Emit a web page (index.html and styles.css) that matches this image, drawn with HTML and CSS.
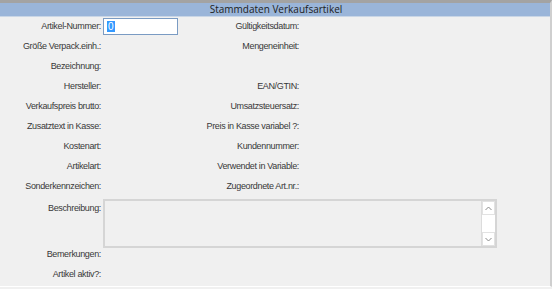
FILE: index.html
```html
<!DOCTYPE html>
<html lang="de">
<head>
    <meta charset="UTF-8">
    <title>Stammdaten Verkaufsartikel</title>
    <link rel="stylesheet" href="styles.css">
</head>
<body>
    <div class="window">
        <div class="title-bar">Stammdaten Verkaufsartikel</div>

        <div class="form">
            <div class="row first">
                <label class="lbl">Artikel-Nummer:</label>
                <div class="field"><div class="txt"><span class="sel">0</span></div></div>
                <label class="lbl">Gültigkeitsdatum:</label>
                <div class="field"></div>
            </div>
            <div class="row">
                <label class="lbl">Größe Verpack.einh.:</label>
                <div class="field"></div>
                <label class="lbl">Mengeneinheit:</label>
                <div class="field"></div>
            </div>
            <div class="row">
                <label class="lbl">Bezeichnung:</label>
                <div class="field"></div>
                <label class="lbl"></label>
                <div class="field"></div>
            </div>
            <div class="row">
                <label class="lbl">Hersteller:</label>
                <div class="field"></div>
                <label class="lbl">EAN/GTIN:</label>
                <div class="field"></div>
            </div>
            <div class="row">
                <label class="lbl">Verkaufspreis brutto:</label>
                <div class="field"></div>
                <label class="lbl">Umsatzsteuersatz:</label>
                <div class="field"></div>
            </div>
            <div class="row">
                <label class="lbl">Zusatztext in Kasse:</label>
                <div class="field"></div>
                <label class="lbl">Preis in Kasse variabel ?:</label>
                <div class="field"></div>
            </div>
            <div class="row">
                <label class="lbl">Kostenart:</label>
                <div class="field"></div>
                <label class="lbl">Kundennummer:</label>
                <div class="field"></div>
            </div>
            <div class="row">
                <label class="lbl">Artikelart:</label>
                <div class="field"></div>
                <label class="lbl">Verwendet in Variable:</label>
                <div class="field"></div>
            </div>
            <div class="row">
                <label class="lbl">Sonderkennzeichen:</label>
                <div class="field"></div>
                <label class="lbl">Zugeordnete Art.nr.:</label>
                <div class="field"></div>
            </div>

            <div class="memo-row">
                <label class="lbl memo-lbl">Beschreibung:</label>
                <div class="memo">
                    <div class="memo-text"></div>
                    <div class="scrollbar">
                        <div class="sb-btn">
                            <svg width="7" height="5" viewBox="0 0 7 5"><path d="M0.5 4 L3.5 1 L6.5 4" fill="none" stroke="#8a8a8a" stroke-width="1"/></svg>
                        </div>
                        <div class="sb-track"></div>
                        <div class="sb-btn">
                            <svg width="7" height="5" viewBox="0 0 7 5"><path d="M0.5 1 L3.5 4 L6.5 1" fill="none" stroke="#8a8a8a" stroke-width="1"/></svg>
                        </div>
                    </div>
                </div>
            </div>

            <div class="row single after-memo">
                <label class="lbl">Bemerkungen:</label>
                <div class="field"></div>
            </div>
            <div class="row single">
                <label class="lbl">Artikel aktiv?:</label>
                <div class="field"></div>
            </div>
        </div>
    </div>
</body>
</html>
```

FILE: styles.css
```css
/* Global */
body {
    margin: 0;
    padding: 0;
    background-color: #f0f0f0;
    font-family: "Liberation Sans", Arial, sans-serif;
    overflow: hidden;
}

/* Window frame */
.window {
    width: 550px;
    height: 283px;
    border-top: 3px solid #a3a3a3;
    border-right: 2px solid #cfcfcf;
    border-bottom: 1px solid #ffffff;
    box-shadow: 0 3px 0 #6e6e6e;
    background-color: #f0f0f0;
}

/* Title bar */
.title-bar {
    height: 13px;
    line-height: 13px;
    background-color: #9ab5d9;
    border-bottom: 1px solid #c9d6e6;
    text-align: center;
    font-family: "Open Sans", "Noto Sans", sans-serif;
    font-size: 10px;
    color: #1c1c1c;
    padding-left: 2px;
}

/* Form grid */
.form {
    display: flex;
    flex-direction: column;
}

.row {
    display: grid;
    grid-template-columns: 101px 99px 99px 1fr;
    height: 20px;
    align-items: center;
}

.row.first {
    margin-top: -1px;
}

.row.single {
    grid-template-columns: 101px 1fr;
}

.row.after-memo {
    margin-top: -4px;
}

.lbl {
    text-align: right;
    font-size: 9px;
    letter-spacing: -0.35px;
    color: #383838;
    white-space: nowrap;
}

/* Text input */
.txt {
    box-sizing: border-box;
    width: 75px;
    height: 17px;
    margin-left: 2px;
    padding: 2px 0 0 3px;
    border: 1px solid #7a9bc3;
    background: #ffffff;
    font-size: 10px;
    line-height: 11px;
}

.sel {
    display: inline-block;
    padding: 0 1px;
    background: #3399ff;
    color: #ffffff;
}

/* Memo field */
.memo-row {
    display: grid;
    grid-template-columns: 101px 396px;
    margin-top: 3px;
    height: 49px;
}

.memo-lbl {
    margin-top: 4px;
}

.memo {
    display: flex;
    margin-left: 2px;
    border: 2px solid #d5d5d5;
    background-color: #f0f0f0;
}

.memo-text {
    flex: 1;
}

.scrollbar {
    width: 13px;
    display: flex;
    flex-direction: column;
    border-left: 1px solid #dcdcdc;
    background: #ffffff;
}

.sb-btn {
    height: 12px;
    display: flex;
    align-items: center;
    justify-content: center;
    background: #ffffff;
    border: 1px solid #e2e2e2;
}

.sb-track {
    flex: 1;
    background: #ffffff;
}
```
